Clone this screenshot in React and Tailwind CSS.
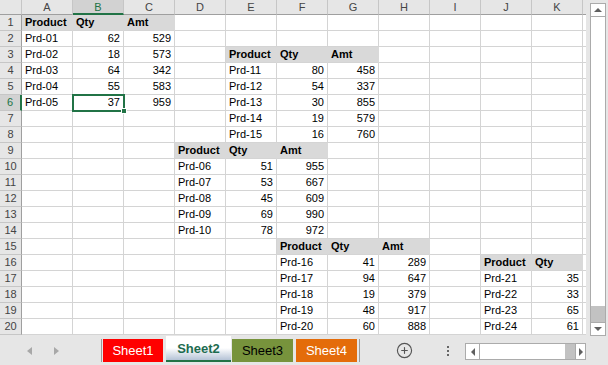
import { CirclePlus } from "lucide-react";

// L is only a sliver at the right edge, so its letter is left off
const cols = ["A", "B", "C", "D", "E", "F", "G", "H", "I", "J", "K", ""];

// each table: top-left row/col (row 1-based, col 0-based), headers, data rows
const tables = [
  {
    r: 1, c: 0, head: ["Product", "Qty", "Amt"],
    rows: [["Prd-01", 62, 529], ["Prd-02", 18, 573], ["Prd-03", 64, 342], ["Prd-04", 55, 583], ["Prd-05", 37, 959]],
  },
  {
    r: 3, c: 4, head: ["Product", "Qty", "Amt"],
    rows: [["Prd-11", 80, 458], ["Prd-12", 54, 337], ["Prd-13", 30, 855], ["Prd-14", 19, 579], ["Prd-15", 16, 760]],
  },
  {
    r: 9, c: 3, head: ["Product", "Qty", "Amt"],
    rows: [["Prd-06", 51, 955], ["Prd-07", 53, 667], ["Prd-08", 45, 609], ["Prd-09", 69, 990], ["Prd-10", 78, 972]],
  },
  {
    r: 15, c: 5, head: ["Product", "Qty", "Amt"],
    rows: [["Prd-16", 41, 289], ["Prd-17", 94, 647], ["Prd-18", 19, 379], ["Prd-19", 48, 917], ["Prd-20", 60, 888]],
  },
  {
    r: 16, c: 9, head: ["Product", "Qty"],
    rows: [["Prd-21", 35], ["Prd-22", 33], ["Prd-23", 65], ["Prd-24", 61]],
  },
];

// build a lookup of filled cells
const cells = {};
tables.forEach((t) => {
  t.head.forEach((h, i) => {
    cells[`${t.r},${t.c + i}`] = { v: h, type: "h" };
  });
  t.rows.forEach((row, j) => {
    row.forEach((v, i) => {
      cells[`${t.r + 1 + j},${t.c + i}`] = { v, type: typeof v === "number" ? "n" : "t" };
    });
  });
});

const selRow = 6;
const selCol = 1;

function Cell({ r, c }) {
  const cell = cells[`${r},${c}`];
  const active = r === selRow && c === selCol;
  let cls = "relative border-r border-b border-[#d4d4d4] bg-white px-[3px] leading-[15px] text-[11px] text-black whitespace-nowrap";
  if (cell && cell.type === "h") {
    cls = "relative border-r border-b border-b-[#d4d4d4] border-r-[#d9d9d9] bg-[#d9d9d9] px-[3px] leading-[15px] text-[11px] font-bold text-black whitespace-nowrap";
  }
  if (cell && cell.type === "n") cls += " text-right";
  if (active) cls += " z-10";
  return (
    <div className={cls}>
      {cell ? cell.v : ""}
      {active && (
        <div className="absolute -left-[1px] -top-[1px] w-[53px] h-[18px] border-2 border-[#217346]">
          <div className="absolute -right-[4px] -bottom-[4px] w-[6px] h-[6px] bg-[#217346] border border-white" />
        </div>
      )}
    </div>
  );
}

function RowCells({ r }) {
  const sel = r === selRow;
  return (
    <>
      <div
        className={
          sel
            ? "bg-[#d2d2d2] border-b border-b-[#c6c6c6] border-r-2 border-r-[#217346] text-center text-[11px] leading-[15px] text-[#217346]"
            : "bg-[#e6e6e6] border-b border-r border-b-[#c6c6c6] border-r-[#9f9f9f] text-center text-[11px] leading-[15px] text-[#444]"
        }
      >
        {r}
      </div>
      {cols.map((_, c) => (
        <Cell key={c} r={r} c={c} />
      ))}
    </>
  );
}

function Sheet() {
  const rows = Array.from({ length: 20 }, (_, i) => i + 1);
  return (
    <div className="w-[586px] h-[336px] overflow-hidden">
      <div className="grid grid-cols-[22px_repeat(12,51px)] grid-rows-[15px_repeat(20,16px)] w-[634px]">
        <div className="bg-[#e6e6e6] border-r border-b border-r-[#c6c6c6] border-b-[#9f9f9f]" />
        {cols.map((l, i) => (
          <div
            key={i}
            className={
              i === selCol
                ? "bg-[#d2d2d2] border-r border-r-[#c6c6c6] border-b-2 border-b-[#217346] text-center text-[11px] leading-[14px] text-[#217346]"
                : "bg-[#e6e6e6] border-r border-b border-r-[#c6c6c6] border-b-[#9f9f9f] text-center text-[11px] leading-[14px] text-[#444]"
            }
          >
            {l}
          </div>
        ))}
        {rows.map((r) => (
          <RowCells key={r} r={r} />
        ))}
      </div>
    </div>
  );
}

function VScroll() {
  return (
    <div className="w-[22px] h-[336px] bg-[#e6e6e6] pl-[4px] pt-[3px]">
      <div className="w-[16px] h-[333px] border border-[#ababab] bg-white flex flex-col">
        <div className="h-[13px] border-b border-[#ababab] flex items-center justify-center">
          <div className="w-0 h-0 border-l-[4px] border-r-[4px] border-b-[4px] border-l-transparent border-r-transparent border-b-[#606060]" />
        </div>
        <div className="flex-1 flex flex-col justify-end">
          <div className="h-[16px] bg-[#c2c2c2]" />
        </div>
        <div className="h-[13px] border-t border-[#ababab] flex items-center justify-center">
          <div className="w-0 h-0 border-l-[4px] border-r-[4px] border-t-[4px] border-l-transparent border-r-transparent border-t-[#606060]" />
        </div>
      </div>
    </div>
  );
}

function TabBar() {
  return (
    <div className="h-[29px] bg-[#e6e6e6] flex items-start">
      {/* nav arrows */}
      <div className="w-[101px] h-[29px] flex items-center pl-[27px] gap-[22px]">
        <div className="w-0 h-0 border-t-[4px] border-b-[4px] border-r-[5px] border-t-transparent border-b-transparent border-r-[#a8a8a8]" />
        <div className="w-0 h-0 border-t-[4px] border-b-[4px] border-l-[5px] border-t-transparent border-b-transparent border-l-[#a8a8a8]" />
      </div>
      <div className="w-[1px] h-[23px] mt-[3px] bg-[#9a9a9a]" />
      <div className="ml-[1px] mt-[3px] w-[60px] h-[23px] bg-[#ff0000] text-white text-[13px] flex items-center justify-center">Sheet1</div>
      <div className="ml-[3px] w-[65px] h-[26px] pt-[2px] bg-gradient-to-b from-white via-white to-[#b5c3d6] border-b-2 border-[#217346] text-[#1d6b4f] font-bold text-[13px] flex items-center justify-center">Sheet2</div>
      <div className="ml-[1px] mt-[3px] w-[61px] h-[23px] bg-[#77933c] text-black text-[13px] flex items-center justify-center">Sheet3</div>
      <div className="ml-[3px] mt-[3px] w-[61px] h-[23px] bg-[#e46c0a] text-white text-[13px] flex items-center justify-center">Sheet4</div>
      <div className="ml-[2px] w-[1px] h-[23px] mt-[3px] bg-[#9a9a9a]" />
      <div className="ml-[36px] h-[29px] flex items-center">
        <CirclePlus size={17} strokeWidth={1.6} color="#555" />
      </div>
      <div className="ml-[34px] h-[29px] flex flex-col items-center justify-center gap-[2px]">
        <div className="w-[2px] h-[2px] bg-[#666]" />
        <div className="w-[2px] h-[2px] bg-[#666]" />
        <div className="w-[2px] h-[2px] bg-[#666]" />
      </div>
      <div className="ml-[16px] mt-[7px] w-[121px] h-[17px] border border-[#ababab] bg-white flex">
        <div className="w-[14px] border-r border-[#ababab] flex items-center justify-center">
          <div className="w-0 h-0 border-t-[4px] border-b-[4px] border-r-[4px] border-t-transparent border-b-transparent border-r-[#606060]" />
        </div>
        <div className="flex-1 flex justify-end">
          <div className="w-[10px] bg-[#c2c2c2]" />
        </div>
        <div className="w-[10px] border-l border-[#ababab] flex items-center justify-center">
          <div className="w-0 h-0 border-t-[4px] border-b-[4px] border-l-[4px] border-t-transparent border-b-transparent border-l-[#606060]" />
        </div>
      </div>
    </div>
  );
}

export default function App() {
  return (
    <div className="w-[608px] h-[365px] overflow-hidden bg-[#e6e6e6]" style={{ fontFamily: '"Liberation Sans", Arial, sans-serif' }}>
      <div className="flex">
        <Sheet />
        <VScroll />
      </div>
      <TabBar />
    </div>
  );
}
